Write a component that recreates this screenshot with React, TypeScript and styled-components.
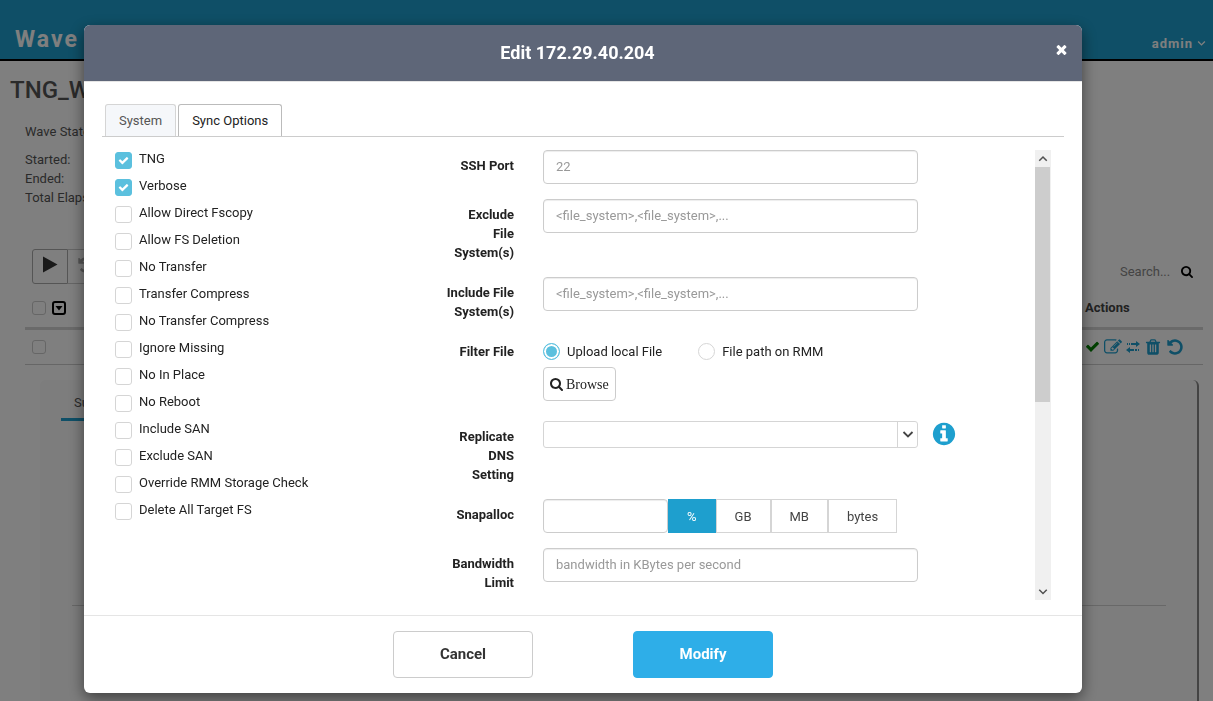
import React, { useState } from 'react';
import styled, { createGlobalStyle, css } from 'styled-components';

const GlobalStyle = createGlobalStyle`
  *, *::before, *::after { box-sizing: border-box; }
  body { margin: 0; font: 13px/19px Roboto, "Liberation Sans", sans-serif; color: #222; background: #fff; overflow: hidden; }
  button, input, select { font: inherit; color: inherit; margin: 0; }
`;

const glyphs = {
  search: 'M1152 832q0-185-131.5-316.5t-316.5-131.5-316.5 131.5-131.5 316.5 131.5 316.5 316.5 131.5 316.5-131.5 131.5-316.5zm512 832q0 52-38 90t-90 38q-54 0-90-38l-343-342q-179 124-399 124-143 0-273.5-55.5t-225-150-150-225-55.5-273.5 55.5-273.5 150-225 225-150 273.5-55.5 273.5 55.5 225 150 150 225 55.5 273.5q0 220-124 399l343 343q37 37 37 90z',
  info: 'M1152 1376v-160q0-14-9-23t-23-9h-96v-512q0-14-9-23t-23-9h-320q-14 0-23 9t-9 23v160q0 14 9 23t23 9h96v320h-96q-14 0-23 9t-9 23v160q0 14 9 23t23 9h448q14 0 23-9t9-23zm-128-896v-160q0-14-9-23t-23-9h-192q-14 0-23 9t-9 23v160q0 14 9 23t23 9h192q14 0 23-9t9-23zm640 416q0 209-103 385.5t-279.5 279.5-385.5 103-385.5-103-279.5-279.5-103-385.5 103-385.5 279.5-279.5 385.5-103 385.5 103 279.5 279.5 103 385.5z',
  check: 'M1671 566q0 40-28 68l-724 724-136 136q-28 28-68 28t-68-28l-136-136-362-362q-28-28-28-68t28-68l136-136q28-28 68-28t68 28l294 295 656-657q28-28 68-28t68 28l136 136q28 28 28 68z',
  undo: 'M1664 896q0 156-61 298t-164 245-245 164-298 61q-172 0-327-72.5t-264-204.5q-7-10-6.5-22.5t8.5-20.5l137-138q10-9 25-9 16 2 23 12 73 95 179 147t225 52q104 0 198.5-40.5t163.5-109.5 109.5-163.5 40.5-198.5-40.5-198.5-109.5-163.5-163.5-109.5-198.5-40.5q-98 0-188 35.5t-160 101.5l137 138q31 30 14 69-17 40-59 40h-448q-26 0-45-19t-19-45v-448q0-42 40-59 39-17 69 14l130 129q107-101 244.5-156.5t284.5-55.5q156 0 298 61t245 164 164 245 61 298z',
  trash: 'M704 1376v-704q0-14-9-23t-23-9h-64q-14 0-23 9t-9 23v704q0 14 9 23t23 9h64q14 0 23-9t9-23zm256 0v-704q0-14-9-23t-23-9h-64q-14 0-23 9t-9 23v704q0 14 9 23t23 9h64q14 0 23-9t9-23zm256 0v-704q0-14-9-23t-23-9h-64q-14 0-23 9t-9 23v704q0 14 9 23t23 9h64q14 0 23-9t9-23zm-544-992h448l-48-117q-7-9-17-11h-317q-10 2-17 11zm928 32v64q0 14-9 23t-23 9h-96v948q0 83-47 143.5t-113 60.5h-832q-66 0-113-58.5t-47-141.5v-952h-96q-14 0-23-9t-9-23v-64q0-14 9-23t23-9h309l70-167q15-37 54-63t79-26h320q40 0 79 26t54 63l70 167h309q14 0 23 9t9 23z',
  edit: 'M888 1184l116-116-152-152-116 116v56h96v96h56zm440-720q-16-16-33 1l-350 350q-17 17-1 33t33-1l350-350q17-17 1-33zm80 594v190q0 119-84.5 203.5t-203.5 84.5h-832q-119 0-203.5-84.5t-84.5-203.5v-832q0-119 84.5-203.5t203.5-84.5h832q63 0 117 25 15 7 18 23 3 17-9 29l-49 49q-14 14-32 8-23-6-45-6h-832q-66 0-113 47t-47 113v832q0 66 47 113t113 47h832q66 0 113-47t47-113v-126q0-13 9-22l64-64q15-15 35-7t20 29zm-96-738l288 288-672 672h-288v-288zm444 132l-92 92-288-288 92-92q28-28 68-28t68 28l152 152q28 28 28 68t-28 68z',
  times: 'M1490 1322q0 40-28 68l-136 136q-28 28-68 28t-68-28l-294-294-294 294q-28 28-68 28t-68-28l-136-136q-28-28-28-68t28-68l294-294-294-294q-28-28-28-68t28-68l136-136q28-28 68-28t68 28l294 294 294-294q28-28 68-28t68 28l136 136q28 28 28 68t-28 68l-294 294 294 294q28 28 28 68z',
};

type GlyphName = keyof typeof glyphs;

const Svg = styled.svg`
  display: block;
  flex: none;
  fill: currentColor;
`;

function Icon({ name, size, color }: { name: GlyphName; size: number; color?: string }) {
  const box = name === 'search' ? '0 128 1664 1664' : '0 0 1792 1792';
  return (
    <Svg width={size} height={size} viewBox={box} color={color} aria-hidden="true">
      <path d={glyphs[name]} />
    </Svg>
  );
}

function Chevron({ up, width = 12, color }: { up?: boolean; width?: number; color?: string }) {
  return (
    <Svg width={width} height={width * 0.75} viewBox="0 0 12 9" color={color} aria-hidden="true">
      <path d={up ? 'M1.5 7 6 2.5 10.5 7' : 'M1.5 2 6 6.5 10.5 2'} fill="none" stroke="currentColor" strokeWidth="1.8" />
    </Svg>
  );
}

/* ---------- page behind the dialog ---------- */

const Page = styled.div`
  display: flex;
  flex-direction: column;
  height: 100vh;
  overflow: hidden;
`;

const TopBar = styled.header`
  display: flex;
  justify-content: space-between;
  align-items: flex-end;
  height: 61px;
  padding: 0 7px 6px 15px;
  border-bottom: 2px solid #000;
  background: #1e9fce;
  color: #fff;
  font-weight: 700;
`;

const Brand = styled.div`
  font-size: 23px;
  line-height: 26px;
  letter-spacing: 2px;
`;

const UserMenu = styled.button`
  display: flex;
  align-items: center;
  gap: 4px;
  padding: 0;
  border: 0;
  background: none;
  font-weight: 700;
  letter-spacing: 1px;
`;

const PageTitle = styled.h1`
  margin: 14px 0 0 10px;
  font-size: 24px;
  line-height: 30px;
  font-weight: 500;
  color: #555;
`;

const Facts = styled.div`
  display: flex;
  flex-direction: column;
  margin: 17px 130px 0 25px;
  color: #555;
`;

const FactLine = styled.div<{ $gap?: boolean }>`
  height: 19px;
  margin-bottom: ${(p) => (p.$gap ? '9px' : '0')};
`;

const Toolbar = styled.div`
  display: flex;
  align-items: center;
  justify-content: space-between;
  margin: 42px 20px 0 32px;
`;

const ToolGroup = styled.div`
  display: flex;
`;

const ToolButton = styled.button<{ $muted?: boolean }>`
  display: flex;
  align-items: center;
  justify-content: center;
  width: 36px;
  height: 35px;
  padding: 0 0 4px;
  border: 1px solid ${(p) => (p.$muted ? '#ccc' : '#aaa')};
  border-left-width: ${(p) => (p.$muted ? '0' : '1px')};
  border-radius: ${(p) => (p.$muted ? '0' : '3px 0 0 3px')};
  background: #fff;
  color: ${(p) => (p.$muted ? '#aaa' : '#333')};
`;

const SearchBox = styled.label`
  display: flex;
  align-items: center;
  margin-top: 10px;
  input {
    width: 61px;
    padding: 0;
    border: 0;
    background: none;
  }
  input::placeholder { color: #888; opacity: 1; }
`;

const Table = styled.table`
  margin: 8px 10px 0 25px;
  border-collapse: collapse;
  color: #444;
  th, td { padding: 0; text-align: left; }
  th { height: 36px; padding-bottom: 3px; border-bottom: 3px solid #d5d5d5; }
  td { height: 36px; border-bottom: 1px solid #ccc; }
  th:last-child, td:last-child { width: 118px; }
`;

const CellRow = styled.div<{ $gap: number; $left?: number }>`
  display: flex;
  align-items: center;
  gap: ${(p) => p.$gap}px;
  padding-left: ${(p) => p.$left ?? 0}px;
`;

const IconButton = styled.button`
  display: flex;
  padding: 0;
  border: 0;
  background: none;
`;

const DetailCard = styled.section`
  flex: 1;
  margin: 15px 14px 0 40px;
  padding: 13px 31px 0 21px;
  border-right: 2px solid #888;
  border-radius: 6px 6px 0 0;
  background: #fafafa;
`;

const DetailTab = styled.button`
  display: block;
  height: 28px;
  padding: 0 13px 8px;
  border: 0;
  border-bottom: 3px solid #1e9fce;
  background: none;
  color: #555;
`;

const DetailRule = styled.hr`
  height: 1px;
  margin: 184px 0 0 11px;
  border: 0;
  background: #d0d0d0;
`;

/* ---------- shared form controls ---------- */

const CheckInput = styled.input<{ $small?: boolean }>`
  appearance: none;
  flex: none;
  width: ${(p) => (p.$small ? '14px' : '17px')};
  height: ${(p) => (p.$small ? '14px' : '17px')};
  border: 1px solid ${(p) => (p.$small ? '#ccc' : '#d5d5d5')};
  border-radius: 3px;
  background: #fff;
  &:checked { border-color: #5bc0de; background: #5bc0de; }
`;

const CheckMark = styled.span`
  position: absolute;
  left: 3px;
  top: 5px;
  pointer-events: none;
`;

const RadioInput = styled.input`
  appearance: none;
  flex: none;
  width: 17px;
  height: 17px;
  border: 1px solid #d5d5d5;
  border-radius: 50%;
  background: #fff;
  &:checked {
    border-color: #5bc0de;
    background: #5bc0de;
    box-shadow: inset 0 0 0 2px #fff;
  }
`;

const fieldBox = css`
  height: 34px;
  border: 1px solid #ccc;
  border-radius: 4px;
  background: #fff;
`;

const TextInput = styled.input`
  ${fieldBox}
  width: 100%;
  padding: 0 12px 1px;
  box-shadow: inset 0 1px 1px rgba(0, 0, 0, 0.075);
  &::placeholder { color: #999; opacity: 1; }
`;

/* ---------- dialog ---------- */

const Overlay = styled.div`
  position: fixed;
  inset: 0;
  padding: 25px 131px 8px 84px;
  background: rgba(0, 0, 0, 0.5);
`;

const Dialog = styled.div`
  border-radius: 6px;
  background: #fff;
  box-shadow: 0 5px 15px rgba(0, 0, 0, 0.5);
`;

const DialogHead = styled.header`
  display: grid;
  grid-template-columns: 1fr auto;
  align-items: center;
  height: 57px;
  padding: 0 13px 0 17px;
  border-bottom: 1px solid #e5e5e5;
  border-radius: 6px 6px 0 0;
  background: #5e6678;
  background-clip: padding-box;
  color: #fff;
`;

const DialogTitle = styled.h2`
  margin: 0;
  font-size: 18px;
  line-height: 24px;
  font-weight: 700;
  text-align: center;
`;

const CloseButton = styled(IconButton)`
  color: #fff;
  padding-bottom: 8px;
`;

const DialogBody = styled.div`
  padding: 22px 18px 15px;
`;

const TabList = styled.div`
  display: flex;
  gap: 2px;
  padding-left: 3px;
  border-bottom: 1px solid #ccc;
`;

const Tab = styled.button<{ $active?: boolean }>`
  height: 32px;
  padding: 0 13px;
  border: 1px solid ${(p) => (p.$active ? '#bbb' : '#d5d5d5')};
  border-bottom: 0;
  border-radius: 3px 3px 0 0;
  background: ${(p) => (p.$active ? '#fff' : '#f5f7fa')};
  color: ${(p) => (p.$active ? '#222' : '#555')};
`;

const Panel = styled.div`
  display: grid;
  grid-template-columns: minmax(0, 1fr) minmax(0, 2fr);
  padding: 13px 13px 0;
`;

const OptionList = styled.div`
  display: flex;
  flex-direction: column;
`;

const Option = styled.label`
  position: relative;
  display: flex;
  gap: 7px;
  height: 27px;
  line-height: 17px;
  input { margin-top: 2px; }
`;

const FormScroll = styled.div`
  display: flex;
  height: 450px;
`;

const Form = styled.form`
  display: flex;
  flex: 1;
  flex-direction: column;
  gap: 15px;
  min-width: 0;
  overflow: hidden;
`;

const Row = styled.div<{ $extra?: boolean }>`
  display: grid;
  grid-template-columns: 87px auto auto;
  justify-content: start;
  align-items: start;
  padding-bottom: ${(p) => (p.$extra ? '5px' : '0')};
`;

const rowLabel = css`
  padding: 6px 0 0 18px;
  font-weight: 700;
  text-align: right;
`;

const RowLabel = styled.label`${rowLabel}`;
const RowCaption = styled.div`${rowLabel}`;

const Field = styled.div`
  margin-left: 29px;
  width: 375px;
`;

const RadioGroup = styled.div`
  display: flex;
  align-items: center;
  gap: 36px;
  height: 31px;
`;

const RadioLabel = styled.label`
  display: flex;
  align-items: center;
  gap: 7px;
`;

const BrowseButton = styled.button`
  ${fieldBox}
  display: flex;
  align-items: center;
  gap: 3px;
  padding: 0 6px;
  color: #222;
  font: 14px/19px "Liberation Serif", serif;
`;

const SelectWrap = styled.div`
  position: relative;
  display: flex;
`;

const Select = styled.select`
  appearance: none;
  width: 100%;
  height: 27px;
  padding: 0 28px 0 8px;
  border: 1px solid #d5d5d5;
  border-radius: 3px;
  background: #fff;
`;

const SelectArrow = styled.span`
  position: absolute;
  top: 1px;
  right: 1px;
  bottom: 1px;
  display: flex;
  align-items: center;
  justify-content: center;
  width: 20px;
  border-left: 1px solid #d5d5d5;
  pointer-events: none;
`;

const InfoButton = styled(IconButton)`
  margin-left: 13px;
  color: #1e9fce;
`;

const UnitGroup = styled.div`
  display: flex;
  ${TextInput} { width: 125px; }
`;

const Unit = styled.button<{ $active?: boolean }>`
  height: 34px;
  padding: 0 18px;
  border: 1px solid ${(p) => (p.$active ? '#1e9fce' : '#d5d5d5')};
  background: ${(p) => (p.$active ? '#1e9fce' : '#fff')};
  color: ${(p) => (p.$active ? '#fff' : '#444')};
`;

const ScrollTrack = styled.div`
  display: flex;
  flex-direction: column;
  align-items: center;
  width: 16px;
  background: #f0f0f0;
  color: #505050;
`;

const ScrollThumb = styled.div`
  width: 100%;
  height: 235px;
  border-right: 1px solid #f0f0f0;
  background: #cdcdcd;
`;

const ScrollEnd = styled.div<{ $bottom?: boolean }>`
  display: flex;
  align-items: center;
  height: 17px;
  margin-top: ${(p) => (p.$bottom ? 'auto' : '0')};
`;

const DialogFoot = styled.footer`
  display: flex;
  justify-content: center;
  gap: 100px;
  padding: 15px;
  border-top: 1px solid #e5e5e5;
`;

const FootButton = styled.button<{ $primary?: boolean }>`
  width: 140px;
  height: 47px;
  border: 1px solid ${(p) => (p.$primary ? '#2eaee8' : '#ccc')};
  border-radius: 4px;
  background: ${(p) => (p.$primary ? '#2eaee8' : '#fff')};
  color: ${(p) => (p.$primary ? '#fff' : '#333')};
  font-size: 15px;
  font-weight: 700;
`;

const optionNames = [
  'TNG', 'Verbose', 'Allow Direct Fscopy', 'Allow FS Deletion', 'No Transfer',
  'Transfer Compress', 'No Transfer Compress', 'Ignore Missing', 'No In Place',
  'No Reboot', 'Include SAN', 'Exclude SAN', 'Override RMM Storage Check', 'Delete All Target FS',
];

const units = ['%', 'GB', 'MB', 'bytes'];

function TextRow({ id, label, hint }: { id: string; label: string; hint: string }) {
  return (
    <Row>
      <RowLabel htmlFor={id}>{label}</RowLabel>
      <Field><TextInput id={id} placeholder={hint} /></Field>
    </Row>
  );
}

function Background() {
  return (
    <Page>
      <TopBar>
        <Brand>Wave</Brand>
        <UserMenu>admin <Chevron width={9} /></UserMenu>
      </TopBar>
      <PageTitle>TNG_W</PageTitle>
      <Facts>
        <FactLine $gap>Wave State</FactLine>
        <FactLine>Started:</FactLine>
        <FactLine>Ended:</FactLine>
        <FactLine>Total Elapsed</FactLine>
      </Facts>
      <Toolbar>
        <ToolGroup>
          <ToolButton aria-label="Run">
            <Svg width="16" height="17" viewBox="0 0 16 17"><path d="M1 0.500 15.5 8.5 1 16.5z" /></Svg>
          </ToolButton>
          <ToolButton $muted aria-label="Refresh"><Icon name="undo" size={18} /></ToolButton>
        </ToolGroup>
        <SearchBox>
          <input placeholder="Search..." aria-label="Search" />
          <Icon name="search" size={12} color="#000" />
        </SearchBox>
      </Toolbar>
      <Table>
        <thead>
          <tr>
            <th>
              <CellRow $gap={6} $left={7}>
                <CheckInput type="checkbox" $small aria-label="Select all" />
                <IconButton aria-label="Selection menu">
                  <Svg width="14" height="14" viewBox="0 0 14 14" color="#000">
                    <rect x="1" y="1" width="12" height="12" rx="2" fill="none" stroke="currentColor" strokeWidth="2" />
                    <path d="M3.5 5h7L7 9.500z" />
                  </Svg>
                </IconButton>
              </CellRow>
            </th>
            <th>Actions</th>
          </tr>
        </thead>
        <tbody>
          <tr>
            <td><CellRow $gap={6} $left={7}><CheckInput type="checkbox" $small aria-label="Select host" /></CellRow></td>
            <td>
              <CellRow $gap={4}>
                <IconButton aria-label="Enabled"><Icon name="check" size={15} color="green" /></IconButton>
                <IconButton aria-label="Edit"><Icon name="edit" size={18} color="#1e9fce" /></IconButton>
                <IconButton aria-label="Sync">
                  <Svg width="14" height="12" viewBox="0 0 14 12" color="#1e9fce">
                    <path d="M1 2h1v2H1zM3 2h1v2H3zM5 2h5V0l4 3-4 3V4H5zM13 8h-1v2h1zM11 8H9v2h2zM8 8H4V6L0 9l4 3v-2h4z" />
                  </Svg>
                </IconButton>
                <IconButton aria-label="Delete"><Icon name="trash" size={18} color="#1e9fce" /></IconButton>
                <IconButton aria-label="Undo"><Icon name="undo" size={18} color="#1e9fce" /></IconButton>
              </CellRow>
            </td>
          </tr>
        </tbody>
      </Table>
      <DetailCard>
        <DetailTab>Su</DetailTab>
        <DetailRule />
      </DetailCard>
    </Page>
  );
}

export default function App() {
  const [checked, setChecked] = useState<string[]>(['TNG', 'Verbose']);
  const [unit, setUnit] = useState('%');
  const toggle = (name: string) =>
    setChecked((all) => (all.includes(name) ? all.filter((n) => n !== name) : [...all, name]));

  return (
    <>
      <GlobalStyle />
      <Background />
      <Overlay>
        <Dialog role="dialog" aria-labelledby="dialog-title">
          <DialogHead>
            <DialogTitle id="dialog-title">Edit 172.29.40.204</DialogTitle>
            <CloseButton aria-label="Close"><Icon name="times" size={15} /></CloseButton>
          </DialogHead>
          <DialogBody>
            <TabList role="tablist">
              <Tab role="tab">System</Tab>
              <Tab role="tab" $active aria-selected="true">Sync Options</Tab>
            </TabList>
            <Panel>
              <OptionList>
                {optionNames.map((name) => (
                  <Option key={name}>
                    <CheckInput type="checkbox" checked={checked.includes(name)} onChange={() => toggle(name)} />
                    {checked.includes(name) && <CheckMark><Icon name="check" size={11} color="#fff" /></CheckMark>}
                    {name}
                  </Option>
                ))}
              </OptionList>
              <FormScroll>
                <Form onSubmit={(e) => e.preventDefault()}>
                  <TextRow id="ssh" label="SSH Port" hint="22" />
                  <TextRow id="exclude" label="Exclude File System(s)" hint="<file_system>,<file_system>,..." />
                  <TextRow id="include" label="Include File System(s)" hint="<file_system>,<file_system>,..." />
                  <Row $extra>
                    <RowCaption id="filter">Filter File</RowCaption>
                    <Field>
                      <RadioGroup role="radiogroup" aria-labelledby="filter">
                        <RadioLabel><RadioInput type="radio" name="filter" defaultChecked />Upload local File</RadioLabel>
                        <RadioLabel><RadioInput type="radio" name="filter" />File path on RMM</RadioLabel>
                      </RadioGroup>
                      <BrowseButton type="button"><Icon name="search" size={13} />Browse</BrowseButton>
                    </Field>
                  </Row>
                  <Row>
                    <RowLabel htmlFor="dns">Replicate DNS Setting</RowLabel>
                    <Field>
                      <SelectWrap>
                        <Select id="dns"><option value="" /></Select>
                        <SelectArrow><Chevron color="#444" /></SelectArrow>
                      </SelectWrap>
                    </Field>
                    <InfoButton type="button" aria-label="About this setting"><Icon name="info" size={26} /></InfoButton>
                  </Row>
                  <Row>
                    <RowLabel htmlFor="snap">Snapalloc</RowLabel>
                    <Field>
                      <UnitGroup>
                        <TextInput id="snap" />
                        {units.map((u) => (
                          <Unit key={u} type="button" $active={u === unit} onClick={() => setUnit(u)}>{u}</Unit>
                        ))}
                      </UnitGroup>
                    </Field>
                  </Row>
                  <TextRow id="bandwidth" label="Bandwidth Limit" hint="bandwidth in KBytes per second" />
                </Form>
                <ScrollTrack>
                  <ScrollEnd><Chevron up width={10} /></ScrollEnd>
                  <ScrollThumb />
                  <ScrollEnd $bottom><Chevron width={10} /></ScrollEnd>
                </ScrollTrack>
              </FormScroll>
            </Panel>
          </DialogBody>
          <DialogFoot>
            <FootButton>Cancel</FootButton>
            <FootButton $primary>Modify</FootButton>
          </DialogFoot>
        </Dialog>
      </Overlay>
    </>
  );
}
